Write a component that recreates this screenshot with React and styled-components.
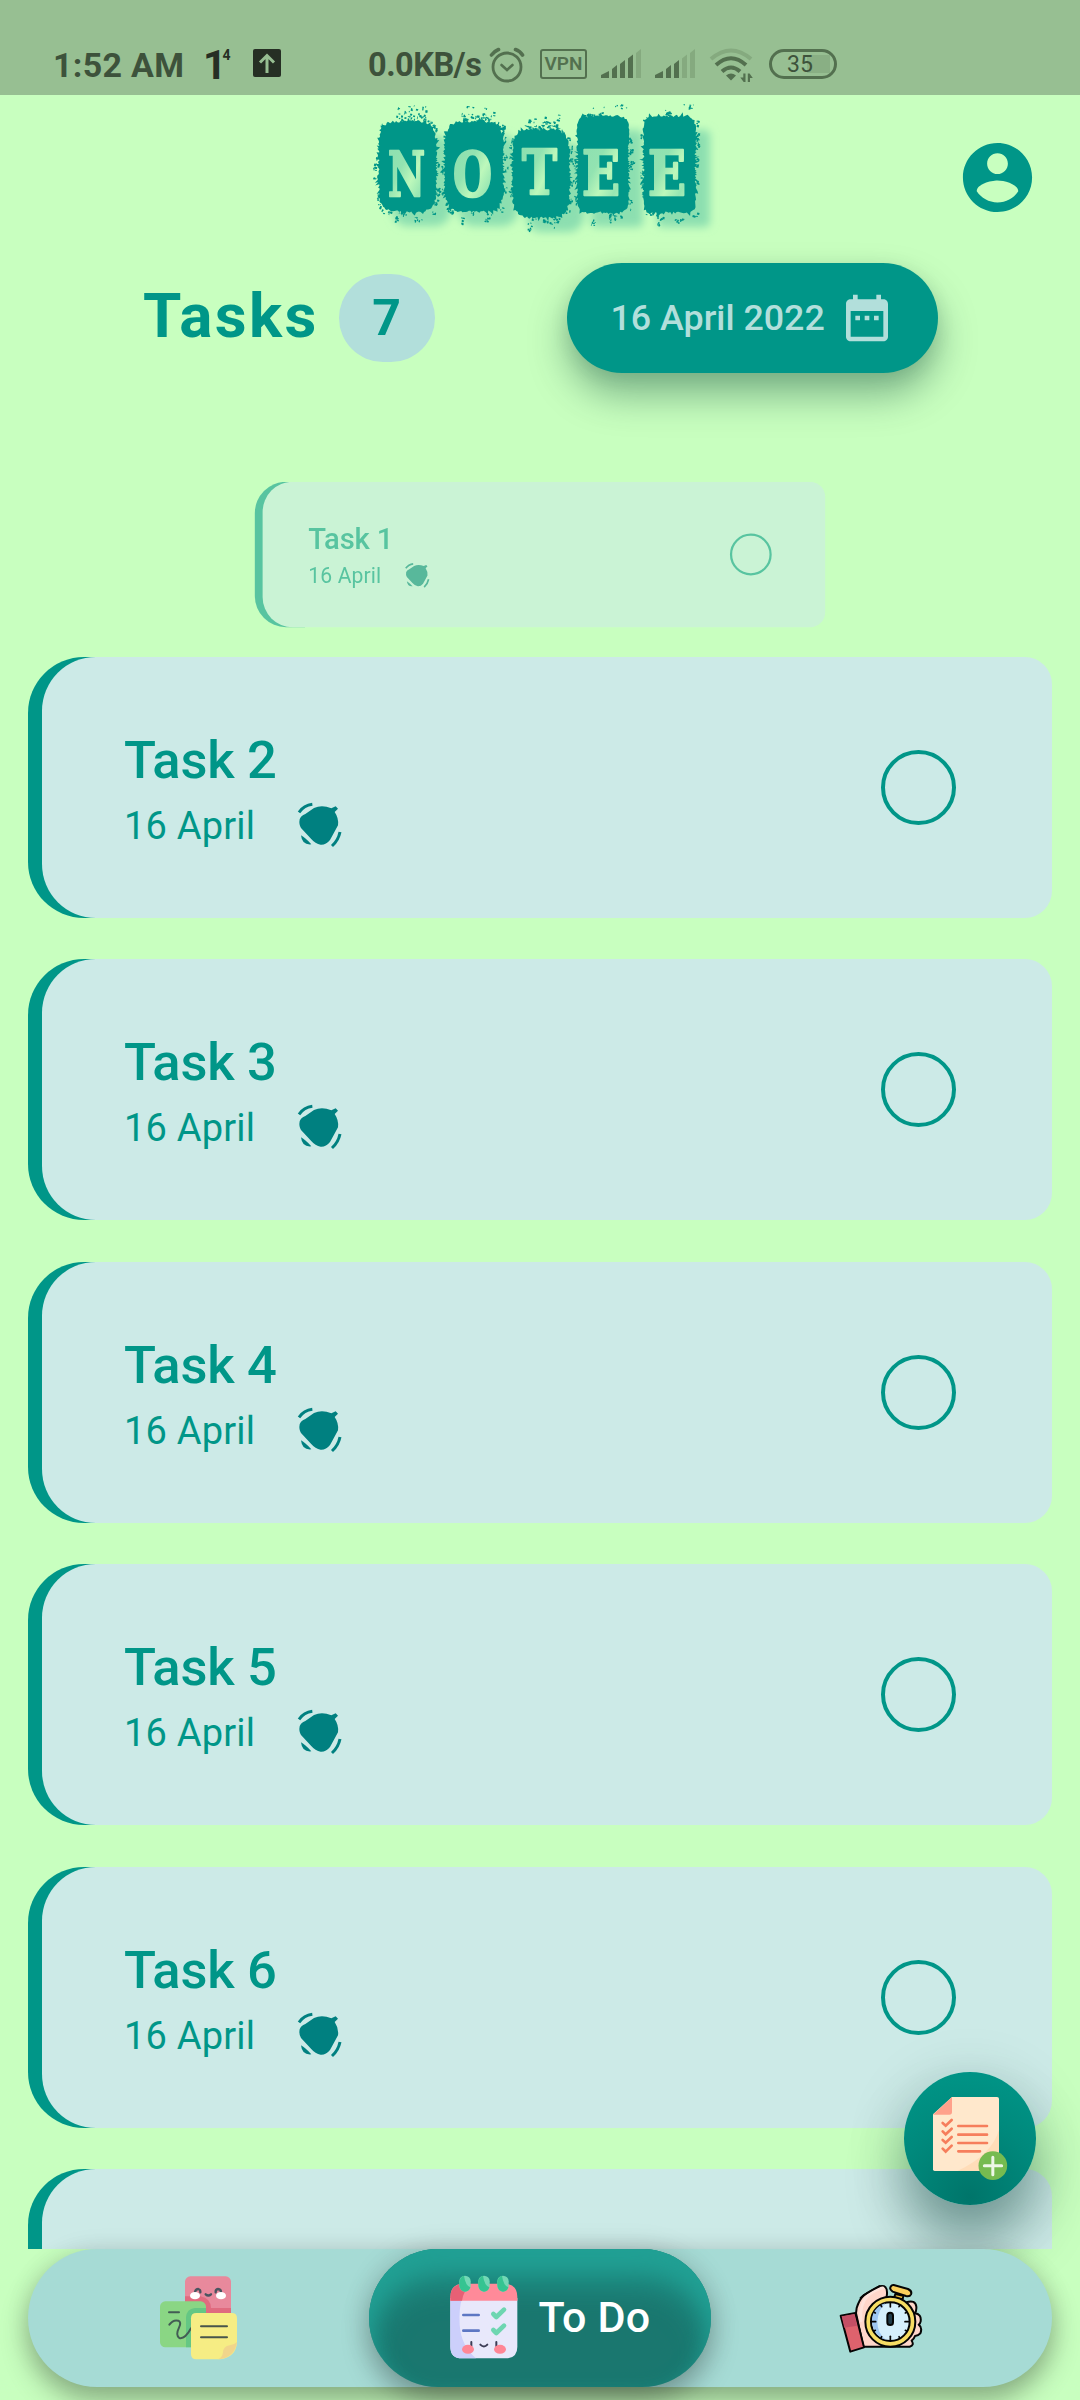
import React from 'react';
import styled, { createGlobalStyle } from 'styled-components';

const TEAL = '#009688';
const MINT = '#c8ffbf';

const GlobalStyle = createGlobalStyle`
  *, *::before, *::after { box-sizing: border-box; }
  body {
    margin: 0;
    background: ${MINT};
    font-family: Roboto, "Noto Sans", sans-serif;
  }
  svg { display: block; flex: none; }
`;

const Screen = styled.div`
  position: relative;
  display: flex;
  flex-direction: column;
  width: 1080px;
  height: 2400px;
  overflow: hidden;
  background: ${MINT};
  color: ${TEAL};
`;

/* ---------- status bar ---------- */

const StatusBar = styled.div`
  display: flex;
  align-items: flex-end;
  height: 95px;
  flex: none;
  padding: 0 0 13px 53px;
  background: #97bf92;
  color: #3d523b;
`;

const Clock = styled.span`
  width: 150px;
  font-size: 34px;
  font-weight: 700;
  line-height: 33px;
  letter-spacing: 0.3px;
  white-space: nowrap;
`;

const Speed = styled.span`
  width: 121px;
  margin-left: 87px;
  font-size: 32.5px;
  font-weight: 700;
  line-height: 33px;
  letter-spacing: -0.5px;
  white-space: nowrap;
`;

const Notice = styled.span`
  display: flex;
  gap: 24px;
  align-items: flex-start;
  height: 33px;
  color: #262f24;
`;

const DayMark = styled.span`
  display: flex;
  width: 26px;
  font-size: 41px;
  line-height: 32px;
  font-weight: 700;
  sup {
    margin-left: -4px;
    font-size: 14px;
    line-height: 12px;
  }
`;

const StatusIcons = styled.div`
  display: flex;
  align-items: flex-start;
  gap: 14px;
  height: 36px;
  margin-bottom: -1px;
`;

const Vpn = styled.span`
  width: 47px;
  height: 30px;
  margin: 2px 0 0 1px;
  border: 2.5px solid #53704f;
  border-radius: 3px;
  color: #53704f;
  font-size: 19px;
  font-weight: 600;
  line-height: 26px;
  text-align: center;
`;

const Battery = styled.span`
  width: 68px;
  height: 30px;
  margin: 2px 0 0 2px;
  padding-right: 6px;
  border: 3px solid #53704f;
  border-radius: 15px;
  background: linear-gradient(90deg, transparent 60%, #89af84 60%) 0 50% / 58px 18px no-repeat;
  font-size: 23px;
  font-weight: 400;
  line-height: 26px;
  text-align: center;
`;

const Signal = ({ level }) => (
  <svg width="40" height="32" viewBox="0 0 40 32">
    {[0, 1, 2, 3, 4].map((i) => {
      const x = i * 8 + (i ? 3 : 0);
      const w = i ? 5 : 8;
      const top = [24, 18, 13, 7.5, 2][i];
      return (
        <path
          key={i}
          d={`M${x} 31V${top + 4}L${x + w} ${top}V31Z`}
          fill={i < level ? '#53704f' : '#85aa7f'}
        />
      );
    })}
  </svg>
);

const AlarmClock = () => (
  <svg width="36" height="36" viewBox="0 0 36 36" fill="none" stroke="#53704f" strokeWidth="2.8" strokeLinecap="round">
    <circle cx="18" cy="20" r="14" />
    <path d="M12.5 18l5.5 5 5.5-5" strokeWidth="2.6" />
    <path d="M2.5 8Q5.5 4 9.500 2.500M26.500 2.500Q31 4 33.500 8" strokeWidth="3.600" />
  </svg>
);

const Wifi = () => (
  <svg width="44" height="36" viewBox="0 0 44 36" fill="none" strokeWidth="4">
    <path d="M2 12Q22-5 42 12" stroke="#85aa7f" />
    <path d="M7 18Q22 4.500 37 18M13 24.500Q22 16.500 31 24.500" stroke="#53704f" />
    <path d="M17 28.500Q22 24.500 27 28.500L22 33.500Z" fill="#53704f" />
    <path d="M36.500 26.500v8.500h-1.800l-3.400-4.500h3v-4zM38.800 35v-8.500h1.800l3.200 4.500h-2.800v4z" fill="#53704f" />
  </svg>
);

/* ---------- header ---------- */

const Header = styled.header`
  display: grid;
  grid-template-columns: 1fr auto 1fr;
  align-items: start;
  height: 150px;
  flex: none;
`;

const Account = styled.button`
  grid-column: 3;
  justify-self: end;
  margin: 41px 41px 0 0;
  padding: 0;
  border: 0;
  background: none;
  color: ${TEAL};
`;

const LogoSvg = styled.svg`
  grid-column: 2;
  font-family: "DejaVu Serif", "Liberation Serif", serif;
  font-weight: 700;
`;

const makeRandom = (seed) => {
  let s = seed;
  return () => {
    s = (s * 16807) % 2147483647;
    return s / 2147483647;
  };
};

const STAMPS = [
  { ch: 'N', x: 378, y: 121, w: 59, h: 91, tx: 388, ty: 196, tw: 37, round: 16, seed: 11 },
  { ch: 'O', x: 444, y: 121, w: 60, h: 91, tx: 453, ty: 196, tw: 39, round: 16, seed: 23 },
  { ch: 'T', x: 512, y: 129, w: 58, h: 89, tx: 522, ty: 194, tw: 35, round: 16, seed: 37 },
  { ch: 'E', x: 577, y: 116, w: 52, h: 97, tx: 582, ty: 195, tw: 38, round: 5, seed: 53 },
  { ch: 'E', x: 643, y: 116, w: 53, h: 97, tx: 648, ty: 195, tw: 38, round: 5, seed: 71 },
];

const stampShape = ({ x, y, w, h, round, seed }) => {
  const rnd = makeRandom(seed * 7919);
  const cx = x + w / 2;
  const cy = y + h / 2;
  const n = round > 10 ? 4.6 : 9;
  const edge = (a, grow) => {
    const c = Math.cos(a);
    const s = Math.sin(a);
    const r = 1 / Math.pow(Math.pow(Math.abs(c) / (w / 2), n) + Math.pow(Math.abs(s) / (h / 2), n), 1 / n);
    return [cx + c * (r + grow), cy + s * (r + grow)];
  };
  let d = '';
  for (let i = 0; i < 190; i += 1) {
    const jag = rnd() > 0.75 ? 5.5 : 2.6;
    const [px, py] = edge((i / 190) * Math.PI * 2, rnd() * jag - 1.6);
    d += `${i ? 'L' : 'M'}${px.toFixed(1)} ${py.toFixed(1)}`;
  }
  d += 'Z';
  const speck = (px, py, size) => {
    const sw = 0.6 + rnd() * size;
    const sh = 0.6 + rnd() * size;
    d += `M${px.toFixed(1)} ${py.toFixed(1)}l${sw.toFixed(1)} .5l-.5 ${sh.toFixed(1)}l-${sw.toFixed(1)} -.4Z`;
  };
  for (let i = 0; i < 24; i += 1) {
    const a = rnd() * Math.PI * 2;
    const s = Math.sin(a);
    const reach = s < -0.8 ? 5 : s > 0.8 ? 7 : 3;
    const far = 1 + rnd() * rnd() * reach;
    for (let k = 0; k < 4; k += 1) {
      const [px, py] = edge(a + (rnd() - 0.5) * 0.12, far + (rnd() - 0.5) * 3);
      speck(px, py, 1.7);
    }
  }
  if (round > 10) {
    for (let i = 0; i < 44; i += 1) {
      const px = x + w * (0.28 + rnd() * 0.55);
      const py = y - 1 - rnd() * (rnd() > 0.5 ? 15 : 7);
      speck(px, py, 2);
    }
  } else {
    for (let i = 0; i < 5; i += 1) {
      speck(x + w * 0.8 + rnd() * 5, y - 12 + rnd() * 4, 2);
      speck(x + w * rnd(), y - 3 - rnd() * 9, 0.7);
    }
  }
  for (let i = 0; i < 7; i += 1) {
    speck(x + w * 0.27 + rnd() * 4, y + h + 4 + rnd() * 8, 1.6);
    speck(x + w * 0.62 + rnd() * 8, y + h + 4 + rnd() * 5, 1.6);
  }
  return d;
};

const Logo = () => (
  <LogoSvg width="380" height="150" viewBox="350 95 380 150">
    <defs>
      <filter id="soft" x="-10%" y="-10%" width="130%" height="130%">
        <feGaussianBlur stdDeviation="4" />
      </filter>
      <linearGradient id="ink" x1="0" y1="0" x2="1" y2="1">
        <stop offset="0" stopColor="#8cdfb0" />
        <stop offset=".38" stopColor="#92e3b1" />
        <stop offset=".6" stopColor="#bdf8bb" />
        <stop offset=".8" stopColor="#97e6b3" />
        <stop offset="1" stopColor="#b9f6ba" />
      </linearGradient>
    </defs>
    <g fill="#8cdfb0" filter="url(#soft)">
      {STAMPS.map((s) => (
        <rect key={s.x} x={s.x + 14} y={s.y + 14} width={s.w} height={s.h} rx={s.round} />
      ))}
    </g>
    {STAMPS.map((s) => (
      <path key={s.x} d={stampShape(s)} fill={TEAL} />
    ))}
    {STAMPS.map((s) => (
      <text
        key={s.x}
        x={s.tx}
        y={s.ty}
        fontSize="62"
        textLength={s.tw}
        lengthAdjust="spacingAndGlyphs"
        fill="url(#ink)"
        stroke="url(#ink)"
        strokeWidth="2.4"
        strokeLinejoin="round"
      >
        {s.ch}
      </text>
    ))}
  </LogoSvg>
);

/* ---------- title row ---------- */

const TitleRow = styled.div`
  display: flex;
  align-items: center;
  height: 110px;
  flex: none;
  margin-top: 17.700px;
  padding-left: 143px;
`;

const Title = styled.h1`
  width: 195.5px;
  margin: 0;
  padding-bottom: 4px;
  font-size: 62px;
  font-weight: 700;
  line-height: 72px;
  letter-spacing: 2.4px;
`;

const Count = styled.span`
  display: flex;
  align-items: center;
  justify-content: center;
  width: 96px;
  height: 88px;
  border-radius: 44px;
  background: #b2dfdb;
  font-size: 50px;
  font-weight: 700;
`;

const DateButton = styled.button`
  display: flex;
  align-items: center;
  gap: 11px;
  width: 371px;
  height: 110px;
  margin-left: 132px;
  padding: 0 43px 0 44px;
  border: 0;
  border-radius: 55px;
  background: ${TEAL};
  box-shadow: 0 22px 38px rgba(0, 60, 50, 0.38), 0 4px 18px rgba(0, 60, 50, 0.1);
  color: #b2dfdb;
  font: 500 35.800px Roboto, sans-serif;
  white-space: nowrap;
  span { width: 217px; text-align: left; }
`;

/* ---------- tasks ---------- */

const List = styled.main`
  display: flex;
  flex-direction: column;
  flex: 1;
  min-height: 0;
  gap: 41.500px;
  margin-top: 109.300px;
  padding: 0 28px;
  overflow: hidden;
`;

const Leaving = styled.div`
  display: flex;
  align-items: center;
  height: 145px;
  flex: none;
  margin-bottom: -11.500px;
  & > * {
    transform: scale(0.557);
    opacity: 0.556;
  }
`;

const Card = styled.article`
  width: 1024px;
  height: 261px;
  flex: none;
  padding-left: 14px;
  border-radius: 56px 27px 27px 56px;
  background: linear-gradient(90deg, ${TEAL} 90px, transparent 90px);
`;

const CardBody = styled.div`
  display: flex;
  align-items: flex-start;
  justify-content: space-between;
  height: 100%;
  padding: 73px 96px 0 82px;
  border-radius: 54px 27px 27px 54px;
  background: #cceae7;
`;

const TaskName = styled.h2`
  margin: 0 0 11px;
  font-size: 52.500px;
  font-weight: 500;
  line-height: 60px;
  letter-spacing: -0.25px;
`;

const Meta = styled.div`
  display: flex;
  height: 47px;
`;

const Due = styled.span`
  width: 172px;
  font-size: 38px;
  line-height: 50px;
  letter-spacing: 0.2px;
`;

const Check = styled.button`
  width: 75px;
  height: 75px;
  margin-top: 20px;
  padding: 0;
  border: 4px solid ${TEAL};
  border-radius: 50%;
  background: none;
`;

const Reminder = () => (
  <svg width="47" height="47" viewBox="888 483 141 141" fill="none" stroke="#008080" strokeWidth="9">
    <path
      d="M899 538Q902 528 916 522L942 504Q966 493 994 505L1007 499L1014 506L1004 516Q1017 535 1014 556Q1004 575 990 600Q978 615 962 614Q946 611 933 596L903 564Q896 553 899 538Z"
      fill="#008080"
      stroke="none"
    />
    <path d="M897 517Q912 496 937 493M1020 576Q1015 601 996 618" />
    <path d="M903 586Q916 593 934 613Q906 616 903 586Z" fill="#008080" stroke="none" />
  </svg>
);

const Task = ({ name }) => (
  <Card>
    <CardBody>
      <div>
        <TaskName>{name}</TaskName>
        <Meta>
          <Due>16 April</Due>
          <Reminder />
        </Meta>
      </div>
      <Check aria-label={`Complete ${name}`} />
    </CardBody>
  </Card>
);

/* Only the top strip of this card is above the navigation. */
const PeekingCard = () => (
  <Card>
    <CardBody />
  </Card>
);

/* ---------- floating button ---------- */

const Fab = styled.button`
  position: absolute;
  z-index: 1;
  left: 904px;
  top: 2072px;
  display: flex;
  width: 132px;
  height: 132.700px;
  padding: 24px 0 0 28px;
  border: 0;
  border-radius: 50%;
  background: radial-gradient(circle at 50% 94%, #00756a 0, #007f73 26%, #00897c 52%, #009385 85%);
  box-shadow: 0 40px 56px rgba(0, 50, 45, 0.38), 0 10px 60px rgba(0, 60, 50, 0.18);
`;

const AddNote = () => (
  <svg width="76" height="86" viewBox="636 198 228 258" fill="none" strokeLinecap="round">
    <path d="M696 201H831Q837 201 837 207V418Q837 423 832 423H644Q639 423 639 418V253Z" fill="#ffe8cc" />
    <path d="M837 300Q815 375 712 423H832Q837 423 837 418Z" fill="#ffddb8" />
    <path d="M696 201V246Q696 254 688 254H639Z" fill="#ffa18b" />
    <path d="M715 288H801M715 314H801M715 339H801M715 364H780" stroke="#f67e5c" strokeWidth="8" />
    <path
      d="M668 279L677 287L695 270M668 304L677 313L695 296M668 330L677 338L695 321M668 356L677 365L695 347"
      stroke="#f67e5c"
      strokeWidth="8"
    />
    <circle cx="818.500" cy="407" r="43" fill="#76bb50" />
    <path d="M793 407H845M818.500 382V434" stroke="#edf7e6" strokeWidth="9" />
  </svg>
);

/* ---------- bottom navigation ---------- */

const Nav = styled.nav`
  position: relative;
  z-index: 2;
  display: grid;
  grid-template-columns: repeat(3, 1fr);
  height: 137.500px;
  flex: none;
  margin: 0 28px 13.500px;
  border-radius: 69px;
  background: #a6dbd5;
  box-shadow: 0 14px 28px rgba(0, 0, 0, 0.3), 0 0 26px rgba(0, 0, 0, 0.08);
`;

const Tab = styled.button`
  display: flex;
  align-items: center;
  justify-content: center;
  gap: 21px;
  padding: ${(p) => p.$pad || '0'};
  border: 0;
  border-radius: 69px;
  font: 500 43px Roboto, sans-serif;
  letter-spacing: 0.200px;
  color: #fff;
  background: ${(p) => (p.$active ? '#1a776f' : 'transparent')};
  box-shadow: ${(p) =>
    p.$active
      ? 'inset 0 34px 34px -4px #21a094, inset 0 12px 22px #21a094, 0 14px 28px rgba(0,0,0,.28), 0 0 30px rgba(0,0,0,.1)'
      : 'none'};
`;

const NotesIcon = () => (
  <svg width="77" height="84" viewBox="480 437 231 252" fill="none" strokeLinecap="round">
    <rect x="555" y="438" width="138" height="130" rx="16" fill="#e8899c" />
    <path d="M555 498H602Q632 504 633 533H693V552H555Z" fill="#e06b7f" />
    <path d="M585 485Q587 476 595 476Q602 478 601 486M647 486Q646 477 654 476Q663 477 663 485M617 492Q625 499 633 492" stroke="#4a5560" strokeWidth="7" />
    <ellipse cx="585" cy="496" rx="15" ry="11" fill="#fff" />
    <ellipse cx="663" cy="496" rx="15" ry="11" fill="#fff" />
    <rect x="480" y="513" width="138" height="138" rx="16" fill="#8ad684" />
    <path d="M618 533V570H573V651H558V561Q560 536 584 533Z" fill="#65c784" />
    <path d="M507 546H537M508 583Q519 567 535 571Q545 576 537 592Q526 614 538 623Q555 627 573 594" stroke="#435c54" strokeWidth="6" />
    <path d="M589 548H695Q711 548 711 564V636Q708 680 662 687H589Q573 687 573 671V564Q573 548 589 548Z" fill="#f6ed84" />
    <path d="M711 635Q704 683 654 687Q667 682 669 666Q670 648 689 645Q703 644 711 635Z" fill="#f1d58b" />
    <path d="M603 588H681M603 621H681" stroke="#48554b" strokeWidth="6" />
  </svg>
);

const TodoIcon = () => (
  <svg width="68" height="84" viewBox="329 166 204 252" fill="none" strokeLinecap="round" strokeLinejoin="round">
    <path d="M330 235H531V381Q531 416 496 416H365Q330 416 330 381Z" fill="#e8e8fb" />
    <path d="M330 235H365Q355 270 358 315Q362 378 407 416H365Q330 416 330 381Z" fill="#cccffb" />
    <path d="M330 243V232Q330 192 370 192H491Q531 192 531 232V243Z" fill="#ff8a99" />
    <path d="M330 243V232Q330 196 368 192L388 200Q369 215 365 243Z" fill="#e76075" />
    {[374, 431, 488].map((x) => (
      <g key={x}>
        <rect x={x - 17} y="168" width="34" height="48" rx="17" fill="#73d8b6" />
        <path d={`M${x - 3} 168Q${x + 1} 197 ${x + 16} 203Q${x + 12} 216 ${x} 216Q${x - 17} 214 ${x - 17} 194Q${x - 18} 173 ${x - 3} 168Z`} fill="#35c491" />
      </g>
    ))}
    <path d="M369 286H415M369 333H415" stroke="#5d77c3" strokeWidth="8" />
    <path d="M459 283L468 292L491 270M459 331L468 340L491 318" stroke="#6ed6b1" strokeWidth="14" />
    <path d="M393 367V380M468 367V380M420 375Q431 386 441 375" stroke="#3c3c55" strokeWidth="6" />
    <ellipse cx="383" cy="389" rx="18" ry="13.500" fill="#ff8695" />
    <ellipse cx="479" cy="389" rx="18" ry="13.500" fill="#ff8695" />
  </svg>
);

const StopwatchIcon = () => (
  <svg width="84" height="70" viewBox="359 757 252 210" fill="none" stroke="#050505" strokeWidth="6" strokeLinecap="round" strokeLinejoin="round">
    <path d="M410 848L412 832Q420 806 434 793L480 767Q505 760 503 790L500 812L560 815Q588 806 591 828Q592 842 586 848Q607 850 604 872Q603 878 598 882Q610 891 603 908Q597 915 587 916Q584 925 577 930Q586 944 571 948H432Z" fill="#ffd6ca" />
    <path d="M425 870Q420 820 445 795Q470 775 490 772" stroke="#ffe3db" strokeWidth="9" />
    <path d="M424 802Q436 789 480 767" stroke="#050505" />
    <path d="M364 855L408 847L434 950L393 963Z" fill="#de626d" />
    <path d="M367 857L405 850L413 885L375 891Z" fill="#c44f65" stroke="none" />
    <path d="M528 790L524 802L550 806L552 795Z" fill="#e9bb3a" />
    <path d="M523 763L566 775Q579 781 575 791Q571 799 560 796L520 783Q509 776 514 768Q518 762 523 763Z" fill="#fbd05d" />
    <circle cx="513" cy="873" r="75" fill="#f7dd63" />
    <circle cx="513" cy="873" r="58" fill="#d5effc" />
    <path d="M498 818Q455 832 458 878Q465 919 501 928Q474 909 474 873Q476 839 498 818Z" fill="#9ec7f3" stroke="none" />
    <g strokeWidth="5">
      {Array.from({ length: 12 }, (_, i) => (
        <path key={i} d={i % 3 ? 'M513 817V821' : 'M513 817V829'} transform={`rotate(${i * 30} 513 873)`} />
      ))}
    </g>
    <rect x="504" y="846" width="17" height="37" rx="8.500" fill="#213c4b" />
  </svg>
);

export default function App() {
  return (
    <Screen>
      <GlobalStyle />
      <StatusBar>
        <Clock>1:52 AM</Clock>
        <Notice>
          <DayMark>1<sup>4</sup></DayMark>
          <svg width="28" height="28" viewBox="0 0 28 28">
            <rect width="28" height="28" rx="2" fill="#262f24" />
            <path d="M14 24V7M7 13.500L14 6.500L21 13.500" fill="none" stroke="#97bf92" strokeWidth="3" />
          </svg>
        </Notice>
        <Speed>0.0KB/s</Speed>
        <StatusIcons>
          <AlarmClock />
          <Vpn>VPN</Vpn>
          <Signal level={4} />
          <Signal level={3} />
          <Wifi />
          <Battery>35</Battery>
        </StatusIcons>
      </StatusBar>

      <Header>
        <Logo />
        <Account aria-label="Account">
          <svg width="83" height="83" viewBox="0 0 24 24" fill="currentColor">
            <path d="M12 2C6.480 2 2 6.480 2 12s4.480 10 10 10 10-4.480 10-10S17.520 2 12 2zm0 3c1.660 0 3 1.340 3 3s-1.340 3-3 3-3-1.340-3-3 1.340-3 3-3zm0 14.200c-2.500 0-4.710-1.280-6-3.220.03-1.990 4-3.080 6-3.080 1.990 0 5.970 1.090 6 3.080-1.290 1.940-3.500 3.220-6 3.220z" />
          </svg>
        </Account>
      </Header>

      <TitleRow>
        <Title>Tasks</Title>
        <Count>7</Count>
        <DateButton>
          <span>16 April 2022</span>
          <svg width="56" height="56" viewBox="0 0 24 24" fill="currentColor">
            <path d="M9 11H7v2h2v-2zm4 0h-2v2h2v-2zm4 0h-2v2h2v-2zm2-7h-1V2h-2v2H8V2H6v2H5c-1.110 0-1.990.9-1.990 2L3 20c0 1.100.89 2 2 2h14c1.100 0 2-.9 2-2V6c0-1.100-.9-2-2-2zm0 16H5V9h14v11z" />
          </svg>
        </DateButton>
      </TitleRow>

      <List>
        <Leaving>
          <Task name="Task 1" />
        </Leaving>
        {[2, 3, 4, 5, 6].map((n) => (
          <Task key={n} name={`Task ${n}`} />
        ))}
        <PeekingCard />
      </List>

      <Fab aria-label="Add task">
        <AddNote />
      </Fab>

      <Nav>
        <Tab aria-label="Notes">
          <NotesIcon />
        </Tab>
        <Tab $active $pad="0 0 2px 20px">
          <TodoIcon />
          To Do
        </Tab>
        <Tab aria-label="Timer">
          <StopwatchIcon />
        </Tab>
      </Nav>
    </Screen>
  );
}
